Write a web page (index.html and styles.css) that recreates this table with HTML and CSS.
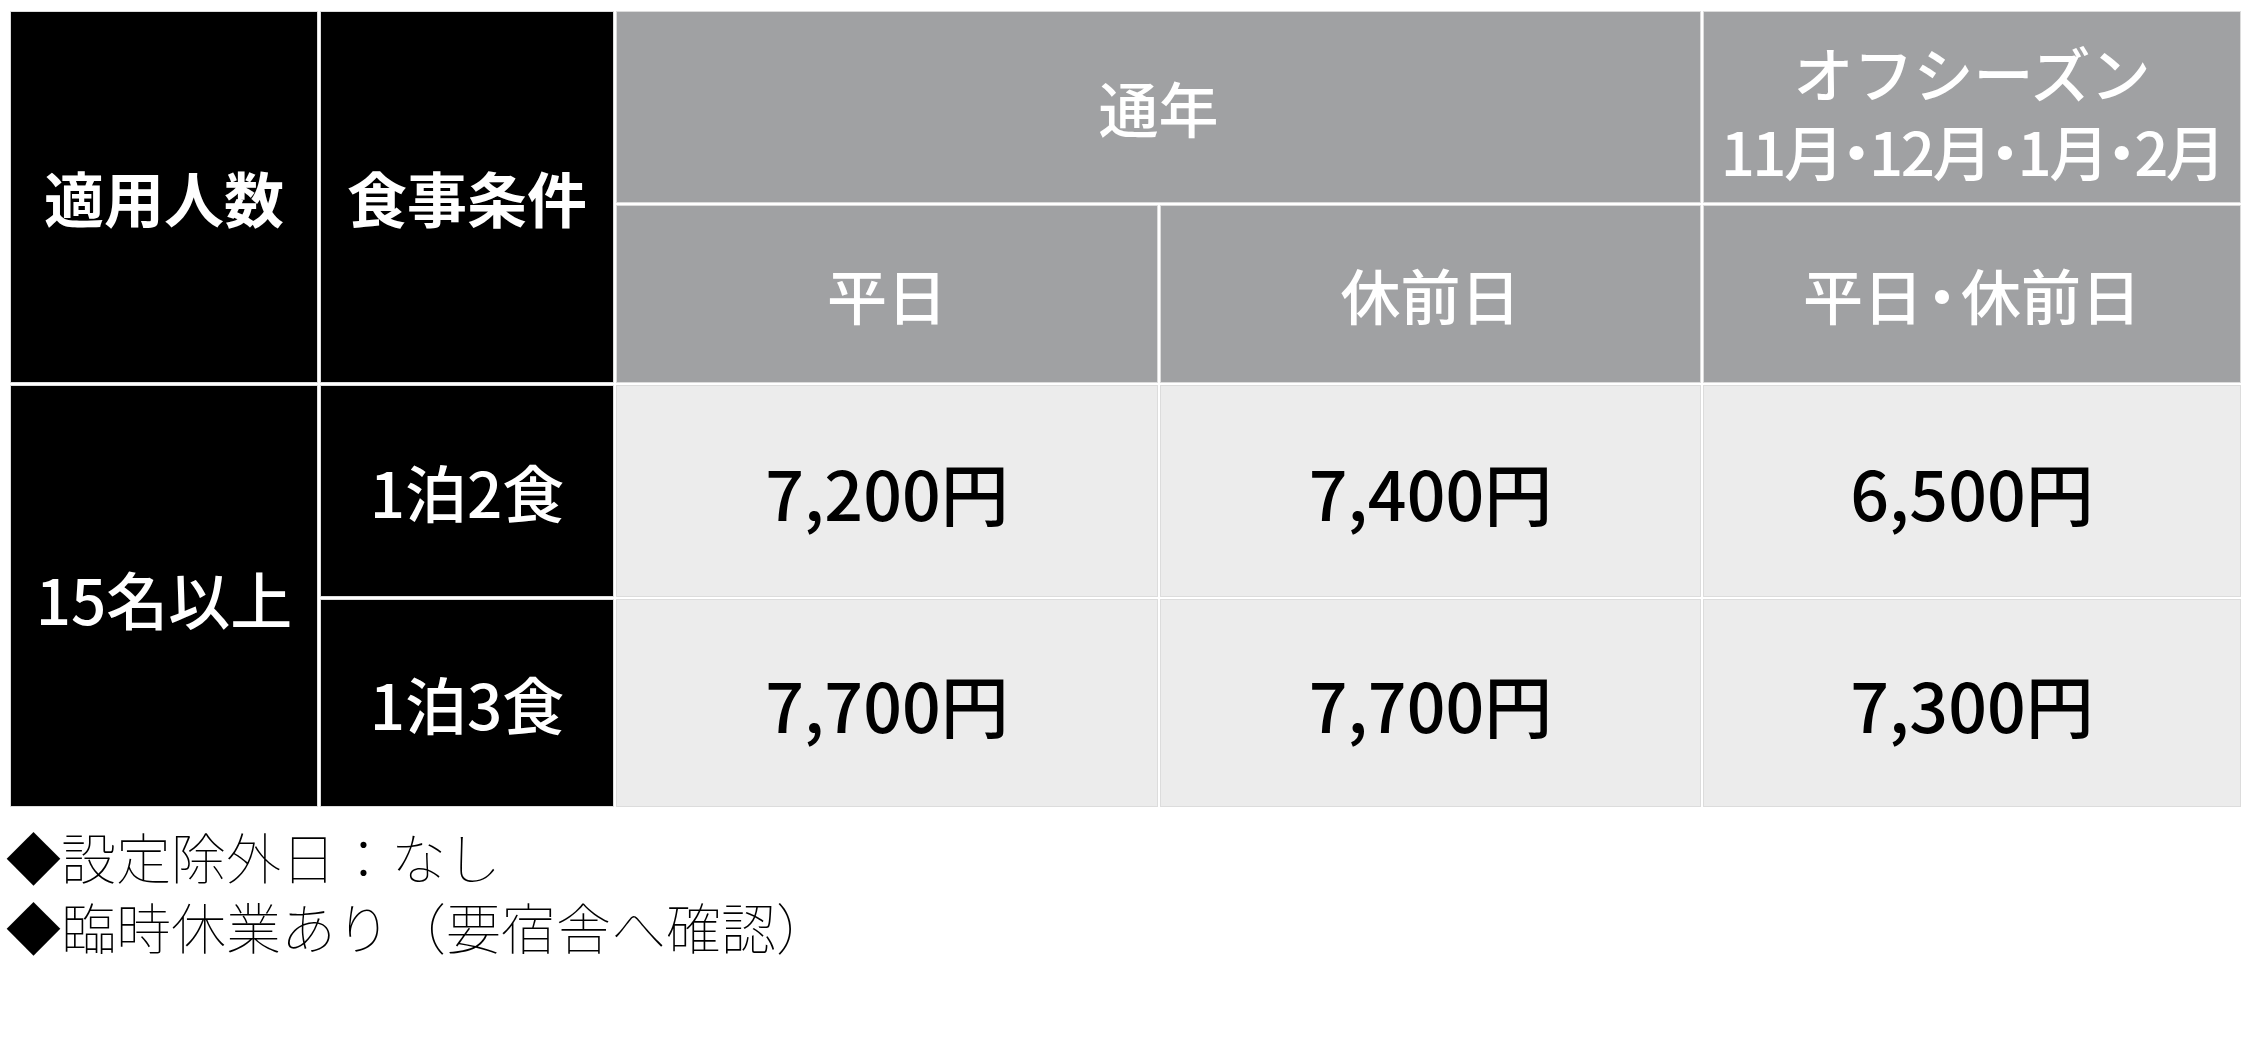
FILE: index.html
```html
<!DOCTYPE html>
<html lang="ja">
<head>
<meta charset="utf-8">
<title>料金表</title>
<link rel="stylesheet" href="styles.css">
</head>
<body>
<div class="page">
  <div class="rate-table">
    <div class="cell head-dark span-rows-2 strong">適用人数</div>
    <div class="cell head-dark span-rows-2 strong">食事条件</div>
    <div class="cell head-gray span-cols-2">通年</div>
    <div class="cell head-gray two-line">
      <span class="line">オフシーズン</span>
      <span class="line months">11月・12月・1月・2月</span>
    </div>
    <div class="cell head-gray">平日</div>
    <div class="cell head-gray">休前日</div>
    <div class="cell head-gray">平日<span class="dot">・</span>休前日</div>

    <div class="cell head-dark span-rows-2 group">15名以上</div>
    <div class="cell head-dark plan">1泊2食</div>
    <div class="cell price">7,200円</div>
    <div class="cell price">7,400円</div>
    <div class="cell price">6,500円</div>
    <div class="cell head-dark plan">1泊3食</div>
    <div class="cell price">7,700円</div>
    <div class="cell price">7,700円</div>
    <div class="cell price">7,300円</div>
  </div>
  <div class="notes">
    <p class="note">◆設定除外日：なし</p>
    <p class="note">◆臨時休業あり（要宿舎へ確認）</p>
  </div>
</div>
</body>
</html>
```

FILE: styles.css
```css
html, body {
  margin: 0;
  padding: 0;
  background: #ffffff;
}

body {
  font-family: "Noto Sans CJK JP", "Noto Sans", sans-serif;
  color: #000000;
}

.page {
  padding: 12px 0 0 11px;
}

.rate-table {
  display: grid;
  grid-template-columns: 306px 292px 540px 539px 536px;
  grid-template-rows: 190px 176px 210px 206px;
  gap: 4px;
  width: max-content;
  background: #ffffff;
}

.cell {
  display: flex;
  flex-direction: row;
  flex-wrap: wrap;
  align-items: center;
  align-content: center;
  justify-content: center;
  text-align: center;
  font-size: 60px;
  line-height: 1.2;
  font-weight: 500;
  box-shadow: 0 0 0 1px #dcdcdc;
}

.span-rows-2 {
  grid-row: span 2;
}

.span-cols-2 {
  grid-column: span 2;
}

.head-dark {
  background: #000000;
  color: #ffffff;
}

.head-gray {
  background: #a0a1a3;
  color: #ffffff;
}

.strong {
  font-weight: 700;
}

.group {
  font-size: 62px;
  padding-top: 4px;
}

.plan {
  font-size: 62px;
}

.dot {
  font-feature-settings: "palt" 1;
  margin: 0 4px;
}

.two-line {
  flex-direction: column;
  flex-wrap: nowrap;
  line-height: 78px;
  padding-top: 8px;
}

.two-line .line {
  display: block;
  white-space: nowrap;
}

.months {
  font-feature-settings: "palt" 1;
  letter-spacing: -2.5px;
}

.price {
  background: #ececec;
  color: #000000;
  font-size: 68px;
  font-weight: 500;
  padding-top: 2px;
}

.notes {
  margin-top: 14px;
  margin-left: -5px;
}

.note {
  margin: 0;
  font-size: 55px;
  line-height: 70px;
  font-weight: 100;
}
```
